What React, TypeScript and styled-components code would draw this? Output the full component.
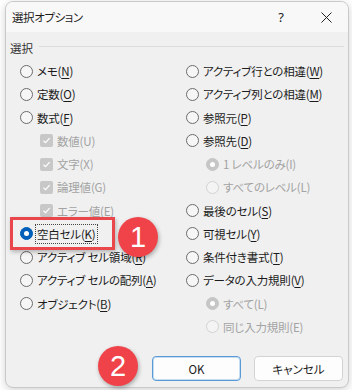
import React from "react"
import styled, { createGlobalStyle } from "styled-components"

const GlobalStyle = createGlobalStyle`
  html, body {
    margin: 0;
    padding: 0;
  }
  body {
    font-family: "Noto Sans CJK JP", "Noto Sans", sans-serif;
    font-feature-settings: "palt";
    color: #1b1b1b;
  }
`

const Stage = styled.div`
  position: relative;
  width: 352px;
  height: 390px;
  box-sizing: border-box;
  padding: 1px 3px 2px 5px;
  background: #ffffff;
  overflow: hidden;
`

const Dialog = styled.div`
  display: flex;
  flex-direction: column;
  height: 100%;
  box-sizing: border-box;
  border: 1px solid #c9c9c9;
  border-radius: 8px;
  background: #f0f0f0;
  overflow: hidden;
  box-shadow: 0 2px 8px rgba(0, 0, 0, 0.18);
`

const TitleBar = styled.div`
  display: flex;
  align-items: center;
  height: 30px;
  flex: none;
  padding-left: 6px;
  background: #f8f8f8;
`

const Title = styled.div`
  flex: 1;
  font-size: 11.5px;
  letter-spacing: -0.4px;
  color: #1b1b1b;
`

const TitleButton = styled.div<{ $w: number }>`
  display: flex;
  align-items: center;
  justify-content: center;
  width: ${(p) => p.$w}px;
  height: 30px;
  font-family: "Noto Sans", sans-serif;
  font-size: 13px;
  color: #222;
`

const Body = styled.div`
  flex: 1;
  display: flex;
  flex-direction: column;
  padding: 0 4px;
`

const GroupHeader = styled.div`
  display: flex;
  align-items: center;
  gap: 6px;
  height: 16px;
  margin-top: 8px;
  font-size: 11.5px;
  color: #333;
`

const GroupLine = styled.div`
  flex: 1;
  height: 1px;
  margin-top: -3px;
  background: #dcdcdc;
`

const Columns = styled.div`
  display: grid;
  grid-template-columns: 166px 1fr;
  padding-left: 10px;
  margin-top: 3.4px;
`

const Column = styled.div`
  display: flex;
  flex-direction: column;
`

const Row = styled.div<{ $indent?: boolean; $disabled?: boolean }>`
  display: flex;
  align-items: center;
  gap: 4px;
  height: 23.27px;
  padding-left: ${(p) => (p.$indent ? 20 : 0)}px;
  font-size: 11.5px;
  letter-spacing: -0.2px;
  color: ${(p) => (p.$disabled ? "#a3a3a3" : "#1b1b1b")};
  white-space: nowrap;

  u {
    text-underline-offset: 2px;
  }
`

const Radio = styled.span<{ $checked?: boolean; $disabled?: boolean }>`
  position: relative;
  flex: none;
  width: 13px;
  height: 13px;
  box-sizing: border-box;
  border-radius: 50%;
  border: 1px solid
    ${(p) => (p.$checked ? (p.$disabled ? "#c6c6c6" : "#005fb8") : p.$disabled ? "#d2d2d2" : "#6b6b6b")};
  background: ${(p) => (p.$checked ? (p.$disabled ? "#c6c6c6" : "#005fb8") : p.$disabled ? "#f4f4f4" : "#f6f6f6")};

  &::after {
    content: "";
    display: ${(p) => (p.$checked ? "block" : "none")};
    position: absolute;
    left: 50%;
    top: 50%;
    width: 5px;
    height: 5px;
    margin: -2.5px 0 0 -2.5px;
    border-radius: 50%;
    background: #ffffff;
  }
`

const CheckBox = styled.span`
  display: flex;
  align-items: center;
  justify-content: center;
  flex: none;
  width: 13px;
  height: 13px;
  border-radius: 2px;
  background: #c8c8c8;
`

const FocusText = styled.span`
  outline: 1px dotted #444;
  outline-offset: 1px;
`

const Footer = styled.div`
  display: flex;
  justify-content: flex-end;
  gap: 13px;
  margin-top: auto;
  padding: 0 1px 6px 0;
`

const Button = styled.div<{ $default?: boolean }>`
  display: flex;
  align-items: center;
  justify-content: center;
  width: 89px;
  height: 25px;
  box-sizing: border-box;
  border-radius: 4px;
  border: 1px solid ${(p) => (p.$default ? "#5a9bd5" : "#d3d3d3")};
  box-shadow: ${(p) => (p.$default ? "inset 0 0 0 1px #c5dcf1" : "none")};
  background: #fdfdfd;
  font-size: 11.5px;
  color: #1b1b1b;
`

const Highlight = styled.div`
  position: absolute;
  left: 10px;
  top: 217px;
  width: 105px;
  height: 33px;
  box-sizing: border-box;
  border: 3px solid #e9474c;
  box-shadow: 1px 2px 4px rgba(0, 0, 0, 0.25);
`

const Badge = styled.div<{ $x: number; $y: number }>`
  position: absolute;
  left: ${(p) => p.$x}px;
  top: ${(p) => p.$y}px;
  width: 40px;
  height: 40px;
  border-radius: 50%;
  background: #ef4349;
  color: #ffffff;
  display: flex;
  align-items: center;
  justify-content: center;
  font-family: "Liberation Sans", Arial, sans-serif;
  font-size: 29px;
  box-shadow: 1px 2px 4px rgba(0, 0, 0, 0.3);
`

const Check = () => (
  <svg width="9" height="9" viewBox="0 0 9 9">
    <path d="M1.5 4.7 L3.6 6.7 L7.6 2.2" stroke="#fff" strokeWidth="1.2" fill="none" />
  </svg>
)

type Opt = {
  label: React.ReactNode
  kind: "radio" | "check"
  indent?: boolean
  disabled?: boolean
  checked?: boolean
}

const L = (text: string, key: string) => (
  <>
    {text}(<u>{key}</u>)
  </>
)

const left: Opt[] = [
  { label: L("メモ", "N"), kind: "radio" },
  { label: L("定数", "O"), kind: "radio" },
  { label: L("数式", "F"), kind: "radio" },
  { label: "数値(U)", kind: "check", indent: true, disabled: true },
  { label: "文字(X)", kind: "check", indent: true, disabled: true },
  { label: "論理値(G)", kind: "check", indent: true, disabled: true },
  { label: "エラー値(E)", kind: "check", indent: true, disabled: true },
  { label: <FocusText>{L("空白セル", "K")}</FocusText>, kind: "radio", checked: true },
  { label: L("アクティブ セル領域", "R"), kind: "radio" },
  { label: L("アクティブ セルの配列", "A"), kind: "radio" },
  { label: L("オブジェクト", "B"), kind: "radio" },
]

const right: Opt[] = [
  { label: L("アクティブ行との相違", "W"), kind: "radio" },
  { label: L("アクティブ列との相違", "M"), kind: "radio" },
  { label: L("参照元", "P"), kind: "radio" },
  { label: L("参照先", "D"), kind: "radio" },
  { label: "1 レベルのみ(I)", kind: "radio", indent: true, disabled: true, checked: true },
  { label: "すべてのレベル(L)", kind: "radio", indent: true, disabled: true },
  { label: L("最後のセル", "S"), kind: "radio" },
  { label: L("可視セル", "Y"), kind: "radio" },
  { label: L("条件付き書式", "T"), kind: "radio" },
  { label: L("データの入力規則", "V"), kind: "radio" },
  { label: "すべて(L)", kind: "radio", indent: true, disabled: true, checked: true },
  { label: "同じ入力規則(E)", kind: "radio", indent: true, disabled: true },
]

const OptionRow = ({ opt }: { opt: Opt }) => (
  <Row $indent={opt.indent} $disabled={opt.disabled}>
    {opt.kind === "radio" ? (
      <Radio $checked={opt.checked} $disabled={opt.disabled} />
    ) : (
      <CheckBox>
        <Check />
      </CheckBox>
    )}
    <span>{opt.label}</span>
  </Row>
)

export default function App() {
  return (
    <>
      <GlobalStyle />
      <Stage>
        <Dialog>
          <TitleBar>
            <Title>選択オプション</Title>
            <TitleButton $w={46}>?</TitleButton>
            <TitleButton $w={44}>
              <svg width="11" height="11" viewBox="0 0 11 11">
                <path d="M0.5 0.5 L10.5 10.5 M10.5 0.5 L0.5 10.5" stroke="#222" strokeWidth="1" />
              </svg>
            </TitleButton>
          </TitleBar>
          <Body>
            <GroupHeader>
              <span>選択</span>
              <GroupLine />
            </GroupHeader>
            <Columns>
              <Column>
                {left.map((o, i) => (
                  <OptionRow key={i} opt={o} />
                ))}
              </Column>
              <Column>
                {right.map((o, i) => (
                  <OptionRow key={i} opt={o} />
                ))}
              </Column>
            </Columns>
            <Footer>
              <Button $default>OK</Button>
              <Button>キャンセル</Button>
            </Footer>
          </Body>
        </Dialog>
        <Highlight />
        <Badge $x={118} $y={217}>1</Badge>
        <Badge $x={98} $y={346}>2</Badge>
      </Stage>
    </>
  )
}
